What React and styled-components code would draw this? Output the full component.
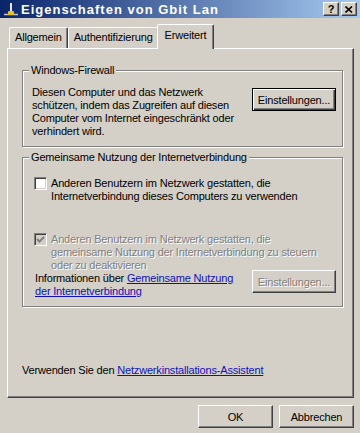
import styled, { createGlobalStyle, css } from 'styled-components'

const GlobalStyle = createGlobalStyle`
    html, body {
        margin: 0;
        padding: 0;
        background: #d4d0c8;
    }
    * {
        box-sizing: border-box;
    }
`

const FONT = `'Liberation Sans', Arial, sans-serif`

const Window = styled.div`
    width: 360px;
    height: 433px;
    background: #d4d0c8;
    display: flex;
    flex-direction: column;
    font-family: ${FONT};
    font-size: 11px;
    letter-spacing: -0.18px;
    color: #000;
    overflow: hidden;
`

const TitleBar = styled.div`
    height: 18px;
    flex-shrink: 0;
    display: flex;
    align-items: center;
    padding: 0 3px 0 3px;
    background: linear-gradient(to right, #0a246a, #a6caf0);
`

const TitleText = styled.div`
    flex: 1;
    margin-left: 2px;
    color: #fff;
    font-weight: bold;
    font-size: 13px;
    letter-spacing: 1px;
    white-space: nowrap;
`

const CaptionButtons = styled.div`
    display: flex;
    gap: 2px;
`

const CaptionButton = styled.div`
    width: 16px;
    height: 14px;
    background: #d4d0c8;
    border: 1px solid;
    border-color: #fff #404040 #404040 #fff;
    box-shadow: inset -1px -1px #808080;
    display: flex;
    align-items: center;
    justify-content: center;
    font-weight: bold;
    font-size: 11px;
    letter-spacing: 0;
    line-height: 1;
`

const Content = styled.div`
    flex: 1;
    display: flex;
    flex-direction: column;
    padding: 6px 6px 0 7px;
`

const TabStrip = styled.div`
    display: flex;
    align-items: flex-end;
    height: 24px;
    padding-left: 2px;
    position: relative;
    z-index: 1;
`

const Tab = styled.div`
    height: 21px;
    padding: 3px 5px 0 5px;
    background: #d4d0c8;
    border-top: 1px solid #fff;
    border-left: 1px solid #fff;
    border-right: 1px solid #404040;
    border-radius: 2px 2px 0 0;
    box-shadow: inset -1px 0 #808080;
    white-space: nowrap;

    ${(p) =>
        p.$active &&
        css`
            height: 25px;
            margin: 0 -2px -1px -2px;
            padding: 4px 7px 0 7px;
            position: relative;
        `}
`

const Panel = styled.div`
    height: 350px;
    display: flex;
    flex-direction: column;
    padding: 0 10px 20px 14px;
    border: 1px solid;
    border-color: #fff #404040 #404040 #fff;
    box-shadow: inset -1px -1px #808080;
`

const Group = styled.div`
    position: relative;
    margin-top: ${(p) => p.$top || '0'};
    border: 1px solid #808080;
    box-shadow: inset 1px 1px #fff, 1px 1px #fff;
    padding: ${(p) => p.$pad || '0'};
`

const Legend = styled.span`
    position: absolute;
    top: -7px;
    left: 6px;
    padding: 0 2px;
    background: #d4d0c8;
    line-height: 13px;
`

const Text = styled.div`
    line-height: 13px;
    white-space: nowrap;
    color: ${(p) => (p.$disabled ? '#808080' : '#000')};
    text-shadow: ${(p) => (p.$disabled ? '1px 1px 0 #fff' : 'none')};
`

const SplitRow = styled.div`
    display: flex;
    justify-content: space-between;
    align-items: flex-start;
`

const CheckRow = styled.div`
    display: flex;
    align-items: flex-start;
    gap: 4px;
    margin-top: ${(p) => p.$top || '0'};
    padding-left: 1px;
`

const CheckBox = styled.div`
    width: 13px;
    height: 13px;
    flex-shrink: 0;
    background: ${(p) => (p.$disabled ? '#d4d0c8' : '#fff')};
    border: 1px solid;
    border-color: #808080 #fff #fff #808080;
    box-shadow: inset 1px 1px #404040, inset -1px -1px #d4d0c8;
    display: flex;
    align-items: center;
    justify-content: center;
`

const Link = styled.span`
    color: #1010b8;
    text-decoration: underline;
`

const Button = styled.div`
    width: ${(p) => p.$w || '84px'};
    height: 23px;
    flex-shrink: 0;
    display: flex;
    align-items: center;
    justify-content: center;
    background: #d4d0c8;
    border: 1px solid;
    border-color: #fff #404040 #404040 #fff;
    box-shadow: inset -1px -1px #808080;
    margin-top: ${(p) => p.$top || '0'};
    color: ${(p) => (p.$disabled ? '#808080' : '#000')};
    text-shadow: ${(p) => (p.$disabled ? '1px 1px 0 #fff' : 'none')};

    ${(p) =>
        p.$default &&
        css`
            border-color: #000;
            box-shadow: inset 1px 1px #fff, inset -1px -1px #404040,
                inset -2px -2px #808080;
        `}
`

const Footer = styled.div`
    display: flex;
    justify-content: flex-end;
    gap: 6px;
    margin-top: 7px;
`

const InfoRow = styled.div`
    display: flex;
    justify-content: space-between;
    align-items: flex-start;
    padding-left: 2px;
`

const Bottom = styled.div`
    margin-top: auto;
`

function NetIcon() {
    return (
        <svg width="16" height="16" viewBox="0 0 16 16">
            <line x1="8" y1="2" x2="8" y2="12" stroke="#e8e8e8" strokeWidth="2" />
            <line x1="1" y1="13.5" x2="15" y2="13.5" stroke="#c0c0c0" strokeWidth="1.5" />
            <rect x="5" y="10" width="6" height="4" rx="1" fill="#e8c020" />
        </svg>
    )
}

function CloseGlyph() {
    return (
        <svg width="8" height="7" viewBox="0 0 8 7">
            <path d="M0.5 0.5 L7 6.5 M7 0.5 L0.5 6.5" stroke="#000" strokeWidth="1.6" />
        </svg>
    )
}

function CheckMark() {
    return (
        <svg width="9" height="9" viewBox="0 0 9 9">
            <polyline points="1,4 3.5,6.5 8,2" fill="none" stroke="#808080" strokeWidth="2" />
        </svg>
    )
}

export default function App() {
    return (
        <>
            <GlobalStyle />
            <Window>
                <TitleBar>
                    <NetIcon />
                    <TitleText>Eigenschaften von Gbit Lan</TitleText>
                    <CaptionButtons>
                        <CaptionButton>?</CaptionButton>
                        <CaptionButton>
                            <CloseGlyph />
                        </CaptionButton>
                    </CaptionButtons>
                </TitleBar>
                <Content>
                    <TabStrip>
                        <Tab>Allgemein</Tab>
                        <Tab>Authentifizierung</Tab>
                        <Tab $active>Erweitert</Tab>
                    </TabStrip>
                    <Panel>
                        <Group $top="21px" $pad="15px 6px 8px 9px">
                            <Legend>Windows-Firewall</Legend>
                            <SplitRow>
                                <Text>
                                    Diesen Computer und das Netzwerk
                                    <br />
                                    schützen, indem das Zugreifen auf diesen
                                    <br />
                                    Computer vom Internet eingeschränkt oder
                                    <br />
                                    verhindert wird.
                                </Text>
                                <Button $default $top="2px">
                                    Einstellungen...
                                </Button>
                            </SplitRow>
                        </Group>
                        <Group $top="10px" $pad="19px 6px 8px 10px">
                            <Legend>Gemeinsame Nutzung der Internetverbindung</Legend>
                            <CheckRow>
                                <CheckBox />
                                <Text>
                                    Anderen Benutzern im Netzwerk gestatten, die
                                    <br />
                                    Internetverbindung dieses Computers zu verwenden
                                </Text>
                            </CheckRow>
                            <CheckRow $top="30px">
                                <CheckBox $disabled>
                                    <CheckMark />
                                </CheckBox>
                                <Text $disabled>
                                    Anderen Benutzern im Netzwerk gestatten, die
                                    <br />
                                    gemeinsame Nutzung der Internetverbindung zu steuern
                                    <br />
                                    oder zu deaktivieren
                                </Text>
                            </CheckRow>
                            <InfoRow>
                                <Text>
                                    Informationen über <Link>Gemeinsame Nutzung</Link>
                                    <br />
                                    <Link>der Internetverbindung</Link>
                                </Text>
                                <Button $disabled $top="-2px">
                                    Einstellungen...
                                </Button>
                            </InfoRow>
                        </Group>
                        <Bottom>
                            <Text>
                                Verwenden Sie den <Link>Netzwerkinstallations-Assistent</Link>
                            </Text>
                        </Bottom>
                    </Panel>
                    <Footer>
                        <Button $w="75px">OK</Button>
                        <Button $w="75px">Abbrechen</Button>
                    </Footer>
                </Content>
            </Window>
        </>
    )
}
